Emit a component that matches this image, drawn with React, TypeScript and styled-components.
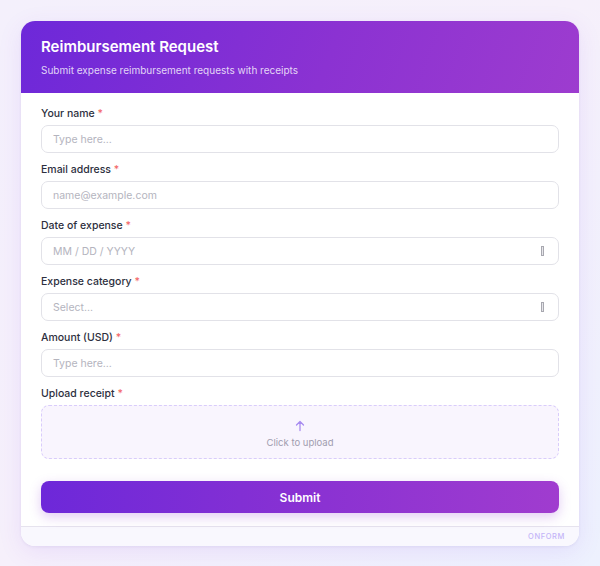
import styled, { createGlobalStyle } from 'styled-components'

const GlobalStyle = createGlobalStyle`
    html, body {
        margin: 0;
        padding: 0;
    }
    body {
        font-family: Inter, "Noto Sans", "Liberation Sans", sans-serif;
        background: linear-gradient(135deg, #f4f0fc 0%, #f6f0fb 50%, #edf1fe 100%);
        min-height: 566px;
    }
    * {
        box-sizing: border-box;
    }
`

const fields = [
    { label: 'Your name', placeholder: 'Type here...' },
    { label: 'Email address', placeholder: 'name@example.com' },
    { label: 'Date of expense', placeholder: 'MM / DD / YYYY', icon: true },
    { label: 'Expense category', placeholder: 'Select...', icon: true },
    { label: 'Amount (USD)', placeholder: 'Type here...' },
]

const App = () => {
    return (
        <>
            <GlobalStyle />
            <Page>
                <Card>
                    <Header>
                        <Title>Reimbursement Request</Title>
                        <Subtitle>Submit expense reimbursement requests with receipts</Subtitle>
                    </Header>

                    <Body>
                        {fields.map((f) => (
                            <Field key={f.label}>
                                <Label>
                                    {f.label} <Req>*</Req>
                                </Label>
                                <InputBox>
                                    <Placeholder>{f.placeholder}</Placeholder>
                                    {f.icon && <TinyIcon />}
                                </InputBox>
                            </Field>
                        ))}

                        <Field>
                            <Label>
                                Upload receipt <Req>*</Req>
                            </Label>
                            <Upload>
                                <svg width="12" height="12" viewBox="0 0 12 12" fill="none">
                                    <path d="M6 10.5V1.5M2.5 5L6 1.5L9.5 5" stroke="#a88bf0" strokeWidth="1.3" strokeLinecap="round" strokeLinejoin="round" />
                                </svg>
                                <UploadText>Click to upload</UploadText>
                            </Upload>
                        </Field>

                        <SubmitButton>Submit</SubmitButton>
                    </Body>

                    <Footer>ONFORM</Footer>
                </Card>
            </Page>
        </>
    )
}

export default App

const Page = styled.div`
    padding: 21px 21px 20px;
`

const Card = styled.div`
    width: 558px;
    background: #fff;
    border-radius: 14px;
    overflow: hidden;
    box-shadow: 0 6px 24px rgba(124, 58, 237, 0.1), 0 1px 3px rgba(80, 60, 140, 0.08);
`

const Header = styled.div`
    padding: 16px 20px 16px;
    background: linear-gradient(110deg, #6d28d9 0%, #8b32d2 55%, #9d3ccf 100%);
    color: #fff;
`

const Title = styled.div`
    font-size: 15px;
    font-weight: 600;
    line-height: 20px;
`

const Subtitle = styled.div`
    margin-top: 6px;
    font-size: 10px;
    line-height: 14px;
    color: rgba(255, 255, 255, 0.8);
`

const Body = styled.div`
    padding: 14px 20px 13px;
    display: flex;
    flex-direction: column;
`

const Field = styled.div`
    display: flex;
    flex-direction: column;
    gap: 4px;
    margin-bottom: 10px;
`

const Label = styled.div`
    font-size: 10.5px;
    font-weight: 500;
    line-height: 14px;
    color: #2d2f3e;
`

const Req = styled.span`
    color: #f36b6b;
`

const InputBox = styled.div`
    height: 28px;
    border: 1.5px solid #e2e2e8;
    border-radius: 7px;
    padding: 0 11px;
    display: flex;
    align-items: center;
    justify-content: space-between;
`

const Placeholder = styled.span`
    font-size: 10.5px;
    color: #b4b4be;
`

const TinyIcon = styled.span`
    width: 3px;
    height: 10px;
    border: 1px solid #a8a8b0;
    background: #e6e6ea;
    margin-right: 3px;
`

const Upload = styled.div`
    height: 54px;
    padding-top: 4px;
    border: 1.5px dashed #d9ccfb;
    border-radius: 8px;
    background: #f9f5fe;
    display: flex;
    flex-direction: column;
    align-items: center;
    justify-content: center;
    gap: 5px;
`

const UploadText = styled.span`
    font-size: 9.5px;
    color: #a09cae;
`

const SubmitButton = styled.button`
    margin-top: 12px;
    height: 32px;
    border: none;
    border-radius: 8px;
    background: linear-gradient(90deg, #6d28d9 0%, #8b32d2 55%, #a03ccf 100%);
    color: #fff;
    font-family: inherit;
    font-size: 12px;
    font-weight: 600;
    box-shadow: 0 4px 12px rgba(139, 50, 210, 0.25);
`

const Footer = styled.div`
    border-top: 1px solid #e6e3ee;
    background: #f9f8fe;
    height: 20px;
    padding: 0 14px;
    display: flex;
    align-items: center;
    justify-content: flex-end;
    font-size: 7.5px;
    font-weight: 500;
    letter-spacing: 0.6px;
    color: #c4b5f8;
`
